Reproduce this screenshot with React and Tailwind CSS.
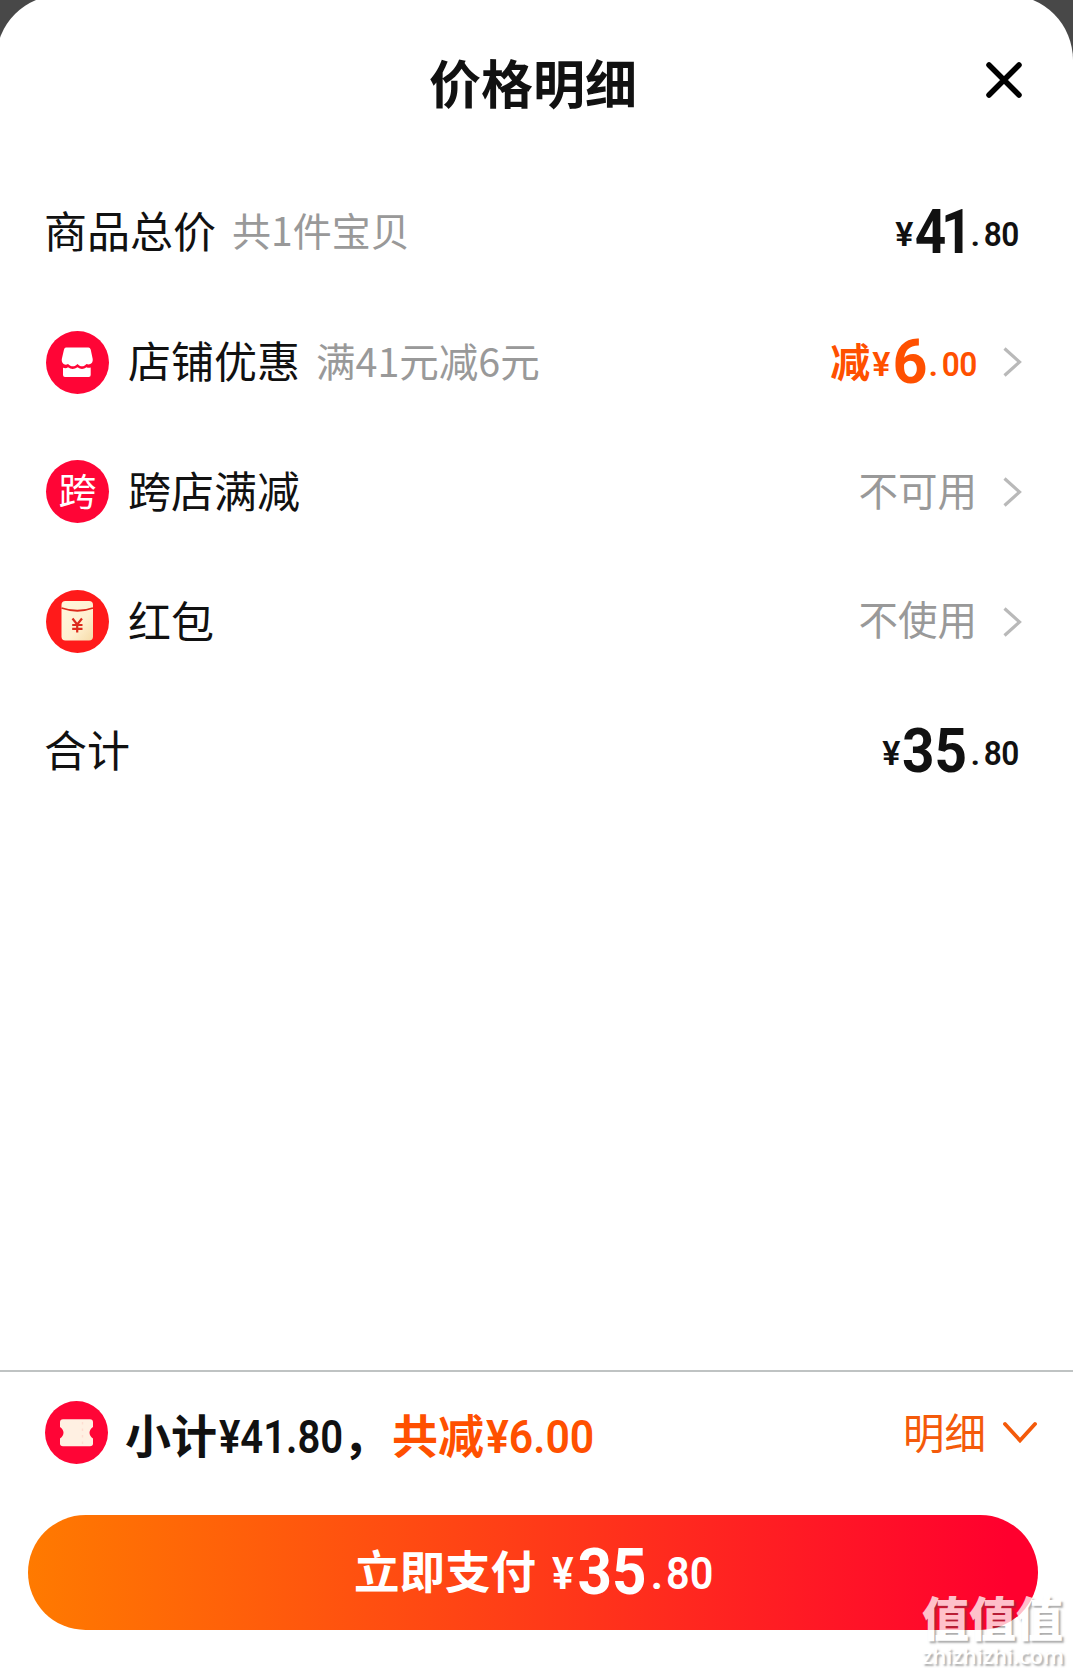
const CJK = "font-['Noto_Sans_CJK_SC',sans-serif]";
const NUM = "font-['Roboto',sans-serif]";

function Chevron() {
  return (
    <svg className="ml-[26px] mr-[50px] h-[34px] w-[22px] shrink-0" viewBox="0 0 22 34" fill="none">
      <path d="M3.500 3.500 L18.500 17 L3.500 30.500" stroke="#b9b9b9" strokeWidth="3.2" />
    </svg>
  );
}

function ShopIcon() {
  return (
    <svg className="size-[63px] shrink-0" viewBox="0 0 63 63">
      <circle cx="31.5" cy="31.5" r="31.5" fill="#ff0536" />
      <path
        d="M20 16.5 H42.5 Q44 16.5 44.7 18.5 L46.7 28 C47.2 32 44 34.5 40.5 33 C37.5 36.3 34.3 36 31.5 33 C28.5 36.3 25 36 22 33 C18.500 35 15.300 32 15.800 28 L18 18.500 Q18.500 16.500 20 16.500 Z"
        fill="#fff"
      />
      <path
        d="M17 36.800 Q20 37.800 22 36.300 Q26.500 39.800 31.500 36.300 Q36 39.800 40.500 36.300 Q42.500 37.300 44.700 36.500 V44 Q44.700 46 42.700 46 H19 Q17 46 17 44 Z"
        fill="#fff"
      />
    </svg>
  );
}

function CrossShopIcon() {
  return (
    <span className="flex size-[63px] shrink-0 items-center justify-center rounded-full bg-[#ff0536] text-[38px] leading-none text-white">
      <span className="-mt-[5px]">跨</span>
    </span>
  );
}

function EnvelopeIcon() {
  return (
    <svg className="size-[63px] shrink-0" viewBox="0 0 63 63" fill="none">
      <defs>
        <linearGradient id="paper" x1="0" y1="0" x2="1" y2="1">
          <stop offset="0" stopColor="#fff6dd" />
          <stop offset="0.6" stopColor="#fff0d0" />
          <stop offset="1" stopColor="#f5dba8" />
        </linearGradient>
      </defs>
      <circle cx="31.5" cy="31.5" r="31.5" fill="#ff1a1a" />
      <rect x="15.500" y="11" width="31.500" height="39.500" rx="4" fill="url(#paper)" />
      <path d="M15.500 18 Q31.500 23.500 47 18" stroke="#dc2a1c" strokeWidth="1.800" />
      <path d="M26.500 28.500 L31.200 34.500 L36 28.500 M31.200 34.500 V42.500 M26.200 35 H36.500 M26.200 38.800 H36.500" stroke="#dc2a1c" strokeWidth="2.200" />
    </svg>
  );
}

function TicketIcon() {
  return (
    <svg className="size-[63px] shrink-0" viewBox="0 0 63 63">
      <circle cx="31.5" cy="31.5" r="31.5" fill="#ff0536" />
      <path
        d="M18 18.300 H45 Q48 18.300 48 21.300 V26 Q44.500 28.500 44.500 31.800 Q44.500 35 48 37.500 V42.500 Q48 45.300 45 45.300 H18 Q15 45.300 15 42.500 V37.500 Q18.500 35 18.500 31.800 Q18.500 28.500 15 26 V21.300 Q15 18.300 18 18.300 Z"
        fill="#fff0e2"
      />
      <path d="M37.500 21 V43" stroke="#ffddd2" strokeWidth="1.500" strokeDasharray="2.500 4" />
    </svg>
  );
}

function Price({ whole, cents, wholeClass = "" }) {
  return (
    <span className={`${NUM} flex items-end font-semibold leading-none`}>
      <span className="pb-[12px] text-[34px]">¥</span>
      <span className={`inline-block origin-right text-[61px] font-bold ${wholeClass}`}>{whole}</span>
      <span className="ml-[3px] pb-[12px] text-[34px]">.</span>
      <span className="ml-px inline-block origin-right scale-x-[0.930] pb-[12px] text-[34px] tracking-[-0.500px]">{cents}</span>
    </span>
  );
}

function Row({ icon, label, note, noteClass = "text-[39.500px]", children }) {
  return (
    <div className="flex h-[129.600px] items-center pl-[46px] text-[#111]">
      {icon && <span className="mr-[19px] flex">{icon}</span>}
      <span className={icon ? "-mt-[5px] text-[43px] leading-none" : "-ml-[2px] -mt-[6px] text-[43px] leading-none"}>{label}</span>
      {note && <span className={`-mt-[6px] ml-[16px] leading-none text-[#999] ${noteClass}`}>{note}</span>}
      <span className="ml-auto flex items-center">{children}</span>
    </div>
  );
}

export default function App() {
  return (
    <div className={`${CJK} relative h-[1675px] w-[1073px] overflow-hidden bg-[#484848]`}>
      <div className="-ml-[4px] -mt-[5px] flex h-[1680px] flex-col rounded-t-[65px] bg-white pl-[4px]">
        <header className="flex h-[173px] items-start pt-[61px]">
          <h1 className="ml-[429px] text-[52px] font-bold leading-none text-[#111]">价格明细</h1>
          <svg className="ml-auto mr-[49px] mt-[4px] size-[40px]" viewBox="0 0 40 40" fill="none">
            <path d="M5 5 L35 35 M35 5 L5 35" stroke="#000" strokeWidth="5.500" strokeLinecap="round" />
          </svg>
        </header>

        <main className="flex-1">
          <Row label="商品总价" note="共1件宝贝" noteClass="text-[39px]">
            <span className="mr-[54px]">
              <Price whole="41" cents="80" wholeClass="-ml-[4px] scale-x-[0.900] tracking-[-6px]" />
            </span>
          </Row>
          <Row icon={<ShopIcon />} label="店铺优惠" note="满41元减6元">
            <span className="-mr-[2px] flex items-center text-[#ff5000]">
              <span className="-mt-[4px] mr-[2px] text-[40px] font-bold leading-none">减</span>
              <Price whole="6" cents="00" wholeClass="ml-[2px] -mr-[2px]" />
            </span>
            <Chevron />
          </Row>
          <Row icon={<CrossShopIcon />} label="跨店满减">
            <span className="-mr-[2px] -mt-[7px] text-[39.500px] leading-none text-[#999]">不可用</span>
            <Chevron />
          </Row>
          <Row icon={<EnvelopeIcon />} label="红包">
            <span className="-mr-[2px] -mt-[7px] text-[39.500px] leading-none text-[#999]">不使用</span>
            <Chevron />
          </Row>
          <Row label="合计">
            <span className="mr-[54px]">
              <Price whole="35" cents="80" wholeClass="-ml-[3px] scale-x-[0.930]" />
            </span>
          </Row>
        </main>

        <footer className="h-[305px] border-t-2 border-[#bfc3c3]">
          <div className="flex h-[120px] items-center pl-[45px] pr-[35px]">
            <TicketIcon />
            <span className="ml-[17px] mt-[5px] flex items-baseline text-[46px] font-bold leading-none text-[#111]">
              小计
              <span className={`${NUM} ml-[2px] inline-block w-[124px] origin-left scale-x-[0.870] whitespace-nowrap font-semibold`}>¥41.80</span>
              ，
            </span>
            <span className="ml-[3px] mt-[5px] flex items-baseline text-[46px] font-bold leading-none text-[#ff5000]">
              共减
              <span className={`${NUM} ml-[2px] inline-block w-[110px] origin-left scale-x-[0.930] whitespace-nowrap font-semibold`}>¥6.00</span>
            </span>
            <span className="-mt-px ml-auto text-[41.500px] leading-none text-[#f45a0a]">明细</span>
            <svg className="ml-[16px] mt-[2px] h-[24px] w-[36px]" viewBox="0 0 36 24" fill="none">
              <path d="M3 3 L18 19.500 L33 3" stroke="#f45a0a" strokeWidth="3.800" strokeLinecap="round" />
            </svg>
          </div>
          <button className="ml-[28px] mt-[23px] flex h-[115px] w-[1010px] items-center rounded-full bg-linear-to-r/srgb from-[#ff7a00] to-[#ff002e] to-97% pl-[326px] text-white">
            <span className="-mt-[5px] text-[45.500px] font-bold leading-none">立即支付</span>
            <span className={`${NUM} ml-[16px] flex items-end font-semibold leading-none`}>
              <span className="inline-block origin-left scale-x-[0.900] pb-[9px] text-[45px]">¥</span>
              <span className="-ml-[3px] inline-block origin-right scale-x-[0.940] text-[64px] font-bold">35</span>
              <span className="ml-[4px] pb-[9px] text-[45px]">.</span>
              <span className="ml-[3px] inline-block origin-left scale-x-[0.920] pb-[9px] text-[45px]">80</span>
            </span>
          </button>
        </footer>
      </div>

      <div className="absolute left-[922px] top-[1591px] flex flex-col text-white opacity-75 [text-shadow:2px_2px_2px_rgba(70,70,70,0.600)]">
        <span className="text-[47px] font-black leading-[50px]">值值值</span>
        <span className="mt-[2px] font-['Open_Sans',sans-serif] text-[21.800px] font-semibold leading-[26px]">zhizhizhi.com</span>
      </div>
    </div>
  );
}
